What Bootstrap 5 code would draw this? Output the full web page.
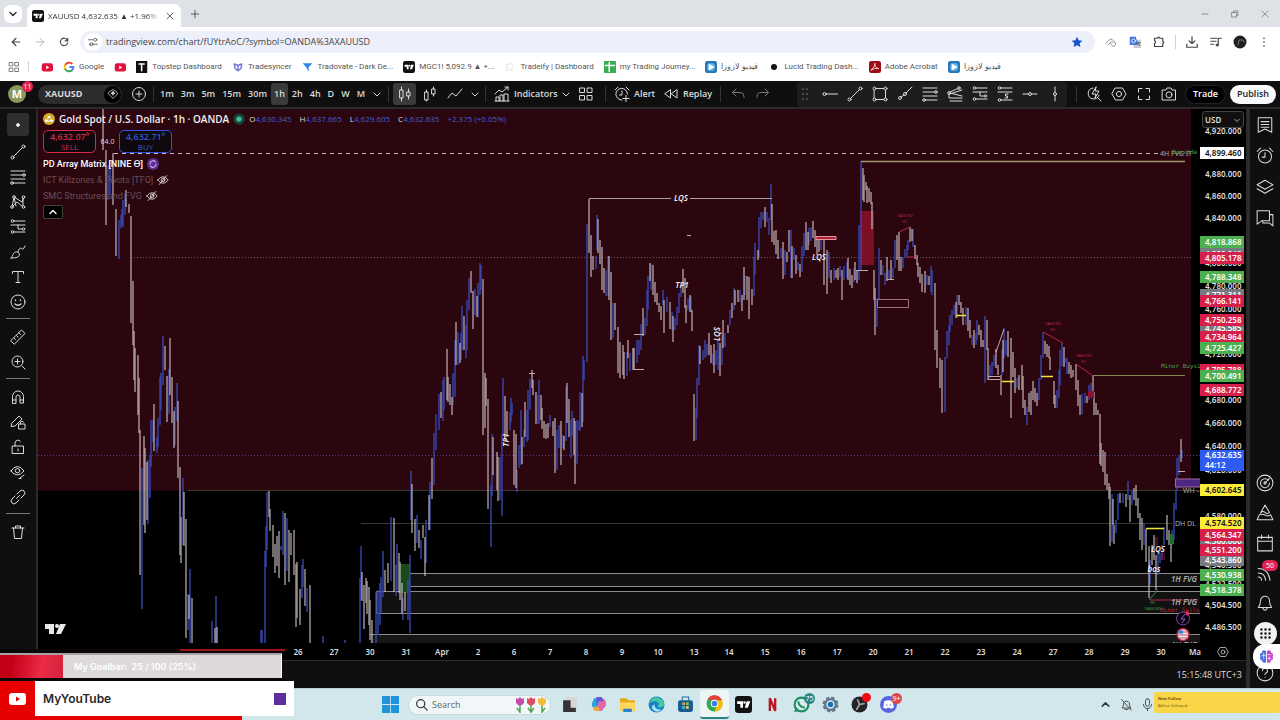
<!DOCTYPE html>
<html lang="en">
<head>
<meta charset="utf-8">
<meta name="viewport" content="width=device-width, initial-scale=1">
<title>XAUUSD 4,632.635</title>
<link href="https://cdn.jsdelivr.net/npm/bootstrap@5.3.0/dist/css/bootstrap.min.css" rel="stylesheet">
<style>
body{font-family:"Open Sans","Noto Sans",sans-serif;font-size:9px;line-height:12px;background:#0f0f0f;color:#dbdbdb}
button,input,select{font:inherit;color:inherit;line-height:inherit}
button{background:none;border:0;padding:0}
a{color:inherit;text-decoration:none}
.ico{width:16px;height:16px;fill:none;stroke:currentColor;stroke-width:1;stroke-linecap:round;stroke-linejoin:round;flex:none;display:block}
.ico-sm{width:12px;height:12px}
.ico-btn{display:flex;align-items:center;justify-content:center;flex:none}
.shell{height:100vh;min-height:600px}
.tabstrip{height:27px;background:#dee1e6;color:#333}
.tabfind{width:18px;height:18px;border-radius:6px;background:#fff;margin:0 5px 0 4px}
.tab-on{height:23px;width:154px;background:#fff;border-radius:7px 7px 0 0;margin-top:4px;padding:0 5px}
.tab-text{width:112px;overflow:hidden;white-space:nowrap;font-size:8px;-webkit-mask-image:linear-gradient(90deg,#000 88%,transparent)}
.winbtn{width:30px;height:27px;color:#777}
.omni{height:30px;background:#fff;color:#444}
.omni .ico-btn{width:24px}
.urlbox{height:22px;border-radius:11px;background:#edf0fa}
.urlbox .site{width:18px;height:18px;border-radius:50%;background:#fff}
.urlbox input{border:0;background:none;outline:0;font-size:9px;color:#444;padding:0}
.marks{height:24px;background:#fff;color:#555;font-family:Roboto,"Noto Sans",sans-serif;font-size:8px;white-space:nowrap;padding-bottom:5px}
.marks a{display:flex;align-items:center;gap:4px;margin-right:10px}
.bar1{height:26px;background:#0f0f0f;white-space:nowrap}
.bar1 .grp{height:16px;border-right:1px solid #333}
.bar1 .ico-btn{width:25px;height:22px}
.bar1 .sel.ico-btn{width:23px;margin-right:1px}
.ivl{gap:1px;padding-left:3px}
.ivl button{padding:0 3px;height:22px;border-radius:3px;font-weight:600}
.ivl button.sel,.bar1 .sel{background:#3a3a3a;border-radius:3px}
.pill{width:84px;height:19px;border-radius:10px;background:#2c2c2c;font-weight:700;padding:0 1px 0 7px}
.bar1 .gem{width:17px;height:17px}
.bar1 .avatar{width:18px;height:18px;border-radius:50%;background:#8b9a58;color:#fff;font-size:11px;font-weight:700;margin:0 12px 0 8px}
.count{font-size:7px;line-height:11px;min-width:11px;border-radius:6px;background:#e0234e;color:#fff;text-align:center;position:absolute}
.drawbar{width:270px;background:#1d1d1d;height:25px;border-radius:4px}
.cta{height:19px;border-radius:10px;padding:0 7px;font-weight:600;font-size:9px}
.work{border-top:2px solid #2b2b2b}
.rail{width:36px;padding-top:4px}
.rail .ico-btn{width:22px;height:25px}
.rail hr{width:24px;margin:4px 0 5px;border-color:#777;opacity:1}
.rail .sel{background:#2e2e2e;border-radius:3px;height:23px;margin-bottom:3px}
.rightrail{width:34px;border-left:4px solid #2b2b2b}
.rightrail .ico-btn{width:30px;height:30px}
.rightrail .top .ico-btn{height:31px}
.rightrail .ico{width:18px;height:18px;stroke-width:.9}
.rightrail .last{padding-top:10px}
.rightrail .apps-ring{width:23px;height:23px;border-radius:50%;background:#f1f1f1;color:#111}
.rightrail .apps-ring .ico{width:13px;height:13px}
.brain{right:0;bottom:51px;width:27px;height:25px;border-radius:12px 0 0 12px;background:#fff;z-index:3}
.chartbox{border-left:2px solid #2b2b2b;background:#000}
.plot text{font-family:"Noto Sans",sans-serif}
.plot .mono text{font-family:"DejaVu Sans Mono",monospace}
.legend{left:5px;top:3px;font-size:9px}
.legend h1{font-size:10px;line-height:14px;font-weight:600;color:#f1eef0}
.ohlc{color:#3f5fd8;font-size:8px}
.ohlc b{color:#ddd;font-weight:400}
.tkt{width:53px;height:23px;border:1px solid;border-radius:5px;background:#0d090c;font-size:8px;line-height:10px;text-align:center}
.tkt strong{font-size:9px;font-weight:600}
.spread{width:23px;font-size:7px}
.sell{color:#d8294b}.buy{color:#2f57df}
.studies{padding-top:3px}
.study{font-family:Roboto,"Noto Sans",sans-serif;font-weight:500;height:16px}
.dim{color:#685058;font-weight:400}
.fold{width:20px;height:14px;border:1px solid #443;background:#000;border-radius:2px;margin-top:1px}
.paxis{width:46px;background:#000;overflow:hidden;font-family:"Noto Sans",sans-serif;font-size:8px;font-weight:600}
.plabel{position:absolute;left:0;width:44px;height:12px;line-height:12px;padding-left:5px;color:#ddd}
.k-g{background:#4caf50;color:#fff}.k-r{background:#d81e4a;color:#fff}.k-x{background:#777a80;color:#fff}
.k-w{background:#fff;color:#111}.k-y{background:#fbec3a;color:#111}.k-b{background:#2f5cf0;color:#fff;height:21px;line-height:10px}
.unit{left:2px;top:2px;width:42px;height:17px;background:#101010;border:1px solid #444;border-radius:3px;color:#ddd;font-size:8px;padding:0 2px;appearance:none}
.unitmark{right:3px;top:5px;position:absolute;pointer-events:none}
.taxis{height:18px;background:#000;font-family:"Noto Sans",sans-serif;font-size:8px;font-weight:600;border-bottom:1px solid #2b2b2b}
.tick{position:absolute;top:3px;transform:translateX(-50%)}
.status{height:27px;font-size:9px;background:#0f0f0f}
.dock{height:32px;background:#d1e7eb;color:#333;padding-left:376px;border-top:1px solid #bccdd2}
.dock .ico-btn{width:29px;height:29px}
.dock .ico,.dockico{width:17px;height:17px;flex:none}
.dock .tray{padding-right:126px}
.dock .tray .ico,.searchbox .ico{width:13px;height:13px}
.dock .active-app{background:#edf5f5;border-radius:3px;border-bottom:2px solid #2b8584}
.searchbox{width:143px;height:20px;border-radius:10px;background:#f1f7f8;margin-left:3px;border:1px solid #c7dade;padding:0 2px 0 6px}
.searchbox input{flex:1 1 0;min-width:0;height:16px;padding:0;border:0;background:none;outline:0;font-size:9px}
.searchbox input::placeholder{color:#666;opacity:1}
.toast-y{right:0;bottom:7px;width:126px;height:21px;background:#f8d648;border-radius:2px;color:#6b5212;font-size:4px;line-height:7px;padding:3px 4px;z-index:4}
.goal{left:0;bottom:0;width:294px;z-index:4}
.goaltop{height:4px;width:285px;background:#0b0607}
.goaltop span{display:block;width:105px;height:2px;margin-left:auto;background:#a31212}
.goalbar{width:282px;height:25px;background:#ddd8da;color:#fff;font-family:Inter,sans-serif;font-size:9px;font-weight:600;border-right:1px solid #fff;border-top:2px solid #a9a3a5}
.goalfill{width:63px;background:linear-gradient(100deg,#c40018 20%,#e92b45 65%,#d5223c);margin-right:11px}
.goalgap{height:3px;width:285px;background:#0e0707}
.channel{height:35px;background:#fff;font-family:Inter,sans-serif;font-size:12px;font-weight:600;color:#29292b}
.yt{width:35px;background:#e60000}
.sq{width:12px;height:12px;background:#5c2f9d}
.redline{height:4px;width:242px;background:#e60000}
</style>
</head>
<body class="overflow-hidden">
<svg width="0" height="0" class="position-absolute" aria-hidden="true"><defs>
<symbol id="chev" viewBox="0 0 16 16"><path d="M5 7l3 3 3-3"/></symbol>
<symbol id="up" viewBox="0 0 16 16"><path d="M4 10l4-4 4 4" stroke-width="1.8"/></symbol>
<symbol id="x" viewBox="0 0 16 16"><path d="M4 4l8 8M12 4l-8 8"/></symbol>
<symbol id="plus" viewBox="0 0 16 16"><path d="M8 3v10M3 8h10"/></symbol>
<symbol id="tv" viewBox="0 0 16 16"><rect width="16" height="16" rx="3" fill="#111" stroke="none"/><path d="M2 5h5.500v6H5V7.500H2zM11 5h3.500l-2.500 6H9.200z" fill="#fff" stroke="none"/><circle cx="9" cy="6.200" r="1.200" fill="#fff" stroke="none"/></symbol>
<symbol id="back" viewBox="0 0 16 16"><path d="M13 8H3m5-5L3 8l5 5" stroke-width="1.500"/></symbol>
<symbol id="reload" viewBox="0 0 16 16"><path d="M12.500 5.500A5 5 0 1 0 13 9M13 3v3.500H9.500" stroke-width="1.500"/></symbol>
<symbol id="tune" viewBox="0 0 16 16"><path d="M2 5h6M9 11h5M3 11h2"/><circle cx="11" cy="5" r="2"/><circle cx="6" cy="11" r="2"/></symbol>
<symbol id="apps" viewBox="0 0 16 16"><path d="M2 2h4.500v4.500H2zM9.500 2H14v4.500H9.500zM2 9.500h4.500V14H2zM9.500 9.500H14V14H9.500z"/></symbol>
<symbol id="ytb" viewBox="0 0 16 16"><rect x="1" y="3" width="15" height="11" rx="3" fill="#e2103b" stroke="none"/><path d="M7 6l4 2.500L7 11z" fill="#fff" stroke="none"/></symbol>
<symbol id="goog" viewBox="0 0 16 16"><g stroke-width="2.600" fill="none" stroke-linecap="butt"><path d="M12.500 4A6 6 0 0 0 3 5.200" stroke="#e94235"/><path d="M3 5a6 6 0 0 0 0 6" stroke="#fbbc04"/><path d="M2.800 10.500a6 6 0 0 0 9 2" stroke="#34a853"/><path d="M11.500 12.700A6 6 0 0 0 14 8H8.500" stroke="#4285f4"/></g></symbol>
<symbol id="play" viewBox="0 0 16 16"><rect width="16" height="16" rx="3" fill="#2878b8" stroke="none"/><rect x="3" y="3" width="10" height="10" rx="3" fill="#5fb5ec" stroke="none"/><path d="M5 3.500L13 8l-8 4.500z" fill="#fff" stroke="none"/></symbol>
<symbol id="cndl" viewBox="0 0 16 16"><path d="M3 4h3v8H3zM4.500 1v3M4.500 12v3M10 6h3v4h-3zM11.500 3v3M11.500 10v3"/></symbol>
<symbol id="cndl2" viewBox="0 0 16 16"><path d="M3 6h3v8H3zM4.500 4v2M10 3h3v5h-3zM11.500 1v2M11.500 8v2M4.500 14v1"/></symbol>
<symbol id="zig" viewBox="0 0 16 16"><path d="M1 12l4-5 4 3 6-7"/></symbol>
<symbol id="ind" viewBox="0 0 16 16"><path d="M1 8l4-4 3 2 6-5M11 1h3v3M2 15v-4h3v4M6 15V9h3v6M10 15v-7h4v7M1 15h14"/></symbol>
<symbol id="alarm" viewBox="0 0 16 16"><circle cx="8" cy="8.500" r="5.800"/><path d="M8 5v4H5.500M1 4l3-3M12 1l3 3"/></symbol>
<symbol id="alarmp" viewBox="0 0 16 16"><path d="M8 14A5.800 5.800 0 1 1 13.500 8M8 5v4H5.500M1 4l3-3M12 1l3 3M12 9.500v6M9 12.500h6"/></symbol>
<symbol id="rew" viewBox="0 0 16 16"><path d="M7.500 4v8L2 8zM14 4v8L8.500 8z"/></symbol>
<symbol id="undo" viewBox="0 0 16 16"><path d="M6 3L2.500 6.500 6 10M2.500 6.500H10a4 4 0 0 1 4 4v1"/></symbol>
<symbol id="drag" viewBox="0 0 16 16"><path d="M6 3v.1M10 3v.1M6 8v.1M10 8v.1M6 13v.1M10 13v.1" stroke-width="1.600"/></symbol>
<symbol id="ray" viewBox="0 0 16 16"><circle cx="2.500" cy="8" r="1.500"/><path d="M4 8h12"/></symbol>
<symbol id="trend" viewBox="0 0 16 16"><circle cx="2.500" cy="13.500" r="1.500"/><circle cx="13.500" cy="2.500" r="1.500"/><path d="M3.500 12.500l9-9"/></symbol>
<symbol id="rect" viewBox="0 0 16 16"><path d="M2.500 2.500h11v11h-11z"/><g fill="#1d1d1d"><circle cx="2.500" cy="2.500" r="1.500"/><circle cx="13.500" cy="2.500" r="1.500"/><circle cx="2.500" cy="13.500" r="1.500"/><circle cx="13.500" cy="13.500" r="1.500"/></g></symbol>
<symbol id="ray2" viewBox="0 0 16 16"><circle cx="3" cy="12" r="1.500"/><circle cx="8" cy="8" r="1.500"/><path d="M4 11l3-2M9 7l6-6"/></symbol>
<symbol id="fib" viewBox="0 0 16 16"><path d="M1 2h14M1 6h12M1 10h14M3 14h12"/><circle cx="14" cy="6" r="1.300"/><circle cx="2" cy="14" r="1.300"/></symbol>
<symbol id="fan" viewBox="0 0 16 16"><path d="M3 6l8-3.500M3 7l12 3M2 8v4h13M3 15h12M3 8l12-4"/><circle cx="12" cy="2" r="1.300"/><circle cx="2" cy="7" r="1.300"/></symbol>
<symbol id="pos" viewBox="0 0 16 16"><path d="M4 2h11M1 6h14M4 13h11M8 6v4h4"/><circle cx="2.500" cy="2" r="1.300"/><circle cx="2.500" cy="13" r="1.300"/><circle cx="13.500" cy="10" r="1.200"/></symbol>
<symbol id="posb" viewBox="0 0 16 16"><path d="M4 2h11M1 6h14M4 14h11M11 8H8.500v2h2v2H8"/><circle cx="2.500" cy="2" r="1.300"/><circle cx="2.500" cy="14" r="1.300"/></symbol>
<symbol id="hline" viewBox="0 0 16 16"><path d="M1 8h5.500M9.500 8H15"/><circle cx="8" cy="8" r="1.500"/></symbol>
<symbol id="vline" viewBox="0 0 16 16"><path d="M8 1v5.500M8 9.500V15"/><circle cx="8" cy="8" r="1.500"/></symbol>
<symbol id="quick" viewBox="0 0 16 16"><path d="M7 2a5.500 5.500 0 1 0 6 7M12 12l3 3M10 1L6 8h4l-1 4 4-7H9.500z"/></symbol>
<symbol id="hex" viewBox="0 0 16 16"><path d="M4.500 2h7L15 8l-3.500 6h-7L1 8z"/><circle cx="8" cy="8" r="2.600"/></symbol>
<symbol id="full" viewBox="0 0 16 16"><path d="M2.500 6V2.500H6M10 2.500h3.500V6M13.500 10v3.500H10M6 13.500H2.500V10"/></symbol>
<symbol id="cam" viewBox="0 0 16 16"><path d="M1.500 4H5l1-2h4l1 2h3.500v10h-13z"/><circle cx="8" cy="8.800" r="3"/></symbol>
<symbol id="patt" viewBox="0 0 16 16"><path d="M2 13L4 3l8 5 2-5M2 13l5-5 6 5L13 3M4 3l2 9"/><g fill="#0f0f0f"><circle cx="2" cy="13" r="1.300"/><circle cx="4" cy="3" r="1.300"/><circle cx="13.500" cy="3" r="1.300"/><circle cx="13.500" cy="13" r="1.300"/></g></symbol>
<symbol id="brush" viewBox="0 0 16 16"><path d="M1 14c2 0 1-5 4.500-6s5 3 3 4.500S4 14 1 14zM8 8c1-4 3-5 4-3 1 1 2-1 3-3"/></symbol>
<symbol id="txt" viewBox="0 0 16 16"><path d="M2.500 4.500V2.500h11v2M8 2.500v11M6 13.500h4"/></symbol>
<symbol id="smile" viewBox="0 0 16 16"><circle cx="8" cy="8" r="7"/><path d="M5.500 6v.5M10.500 6v.5M5 10q3 2.500 6 0" stroke-width="1.300"/></symbol>
<symbol id="ruler" viewBox="0 0 16 16"><path d="M1 11.500L11.500 1 15 4.500 4.500 15zM4 9l1.500 1.500M6.500 6.500L8 8M9 4l1.500 1.500"/></symbol>
<symbol id="zoomi" viewBox="0 0 16 16"><circle cx="7.500" cy="7.500" r="5.500"/><path d="M12 12l3 3M5 7.500h5M7.500 5v5"/></symbol>
<symbol id="magn" viewBox="0 0 16 16"><path d="M2.500 14V7.500a5.500 5.500 0 0 1 11 0V14H10V8a2 2 0 0 0-4 0v6zM2.500 11H6M10 11h3.500"/></symbol>
<symbol id="penl" viewBox="0 0 16 16"><path d="M2 9L9 2l3 3-7 7-3.500.5zM9 10h6v5H9zM10.500 10V8q1.500-2 3 0"/></symbol>
<symbol id="lock" viewBox="0 0 16 16"><path d="M2.500 7h11v7.500h-11zM5 7V4a3 3 0 0 1 5.500-1.500M8 10v2"/></symbol>
<symbol id="eye" viewBox="0 0 16 16"><path d="M1 7q6-9 13 0-7 8-13 0zM10 14l4-3M9 14.500h2"/><circle cx="7.500" cy="6.700" r="2.200"/></symbol>
<symbol id="noeye" viewBox="0 0 16 16"><path d="M1 8q7-9 14 0-7 9-14 0zM13 2L3 14"/><circle cx="8" cy="8" r="2.500"/></symbol>
<symbol id="link" viewBox="0 0 16 16"><path d="M6.500 9.500l3-3M7 5l3-3a2.800 2.800 0 0 1 4 4l-3 3M9 11l-3 3a2.800 2.800 0 0 1-4-4l3-3"/></symbol>
<symbol id="bin" viewBox="0 0 16 16"><path d="M2 4h12M5.500 4V2h5v2M3.500 4l1 10.500h7l1-10.500"/></symbol>
<symbol id="list" viewBox="0 0 16 16"><path d="M2 1.500h12v13l-6-3-6 3zM4.500 5h7M4.500 7.500h7M4.500 10h7"/></symbol>
<symbol id="layers" viewBox="0 0 16 16"><path d="M8 2l7 4-7 4-7-4zM1 9.500l7 4 7-4"/></symbol>
<symbol id="chat" viewBox="0 0 16 16"><path d="M1 1.500h11v9H5L1 13.500zM12 5h3v10l-3-2.500H6v-2"/></symbol>
<symbol id="radar" viewBox="0 0 16 16"><circle cx="8" cy="8" r="7"/><path d="M11 5.500A4 4 0 1 0 12 8M8 8l4.500-4.500"/><circle cx="8" cy="8" r="1"/></symbol>
<symbol id="pyr" viewBox="0 0 16 16"><path d="M8 1l4 6.500q-2 2-4 0t-4 .5zM3 9.500L1 14h14l-2-4.500q-2 2-4.500.5T3 9.500"/></symbol>
<symbol id="cal" viewBox="0 0 16 16"><path d="M1.500 3h13v12h-13zM1.500 6.500h13M5 1v3M11 1v3"/></symbol>
<symbol id="feed" viewBox="0 0 16 16"><path d="M2 4q9 0 10.500 10.500M2 8q6 0 6.500 6.500M2 11.500q3 0 3 3"/></symbol>
<symbol id="bell" viewBox="0 0 16 16"><path d="M2 12q2-2 2-6a4 4 0 0 1 8 0q0 4 2 6zM6 12.500q2 4 4 0"/></symbol>
<symbol id="dots9" viewBox="0 0 16 16"><g stroke-width="3"><path d="M3 3h.01M8 3h.01M13 3h.01M3 8h.01M8 8h.01M13 8h.01M3 13h.01M8 13h.01M13 13h.01"/></g></symbol>
<symbol id="help" viewBox="0 0 16 16"><circle cx="8" cy="8" r="7"/><path d="M5.800 6a2.200 2.200 0 1 1 3 2q-.8.500-.8 1.500M8 12v.1"/></symbol>
<symbol id="mag" viewBox="0 0 16 16"><circle cx="7" cy="7" r="5" stroke-width="1.500"/><path d="M11 11l4 4" stroke-width="1.500"/></symbol>
</defs></svg>

<div class="shell d-flex flex-column position-relative">
<header class="flex-shrink-0">
 <div class="tabstrip d-flex align-items-center">
  <button class="tabfind ico-btn" aria-label="Search tabs"><svg class="ico ico-sm" viewBox="0 0 16 16"><path d="M4 6l4 4 4-4" stroke-width="2"/></svg></button>
  <div class="tab-on d-flex align-items-center gap-1"><svg class="ico ico-sm"><use href="#tv"/></svg><span class="tab-text">XAUUSD 4,632.635 ▲ +1.96% Un</span><button class="ico-btn ms-auto" aria-label="Close tab"><svg class="ico ico-sm"><use href="#x"/></svg></button></div>
  <button class="ico-btn ms-2" aria-label="New tab"><svg class="ico ico-sm"><use href="#plus"/></svg></button>
  <div class="d-flex ms-auto">
   <button class="winbtn ico-btn" aria-label="Minimize"><svg class="ico ico-sm" viewBox="0 0 16 16"><path d="M4 8h8"/></svg></button>
   <button class="winbtn ico-btn" aria-label="Restore"><svg class="ico ico-sm" viewBox="0 0 16 16"><path d="M4 6h6v6H4zM6 6V4h6v6h-2"/></svg></button>
   <button class="winbtn ico-btn" aria-label="Close"><svg class="ico ico-sm"><use href="#x"/></svg></button>
  </div>
 </div>
 <div class="omni d-flex align-items-center px-1">
  <button class="ico-btn" aria-label="Back"><svg class="ico ico-sm"><use href="#back"/></svg></button>
  <button class="ico-btn opacity-50" aria-label="Forward"><svg class="ico ico-sm" viewBox="0 0 16 16"><path d="M3 8h10M8 3l5 5-5 5"/></svg></button>
  <button class="ico-btn" aria-label="Reload"><svg class="ico ico-sm"><use href="#reload"/></svg></button>
  <div class="urlbox d-flex align-items-center flex-grow-1 mx-1 pe-1"><span class="site ico-btn mx-1"><svg class="ico ico-sm"><use href="#tune"/></svg></span><input class="flex-grow-1" aria-label="Address" value="tradingview.com/chart/fUYtrAoC/?symbol=OANDA%3AXAUUSD"><svg class="ico ico-sm me-2" viewBox="0 0 16 16"><path d="M8 1l2.200 4.700 5 .6-3.700 3.500 1 5L8 12.300l-4.500 2.500 1-5L.8 6.300l5-.6z" fill="#1a55cf" stroke="none"/></svg></div>
  <span class="ico-btn"><svg class="ico ico-sm opacity-75" viewBox="0 0 16 16"><path d="M1 10l5-5q2-2 4 0l3 3q3 3 0 5t-4-1l-2-2M4 12l4-4q2-1 3 1"/></svg></span>
  <span class="ico-btn"><svg class="ico ico-sm" viewBox="0 0 16 16"><rect x="6" y="5" width="10" height="11" rx="1" fill="#c5cad2" stroke="none"/><path d="M1 1h8l3 11H1z" fill="#4479dd" stroke="none"/><circle cx="6" cy="6.500" r="2.500" stroke="#fff"/><path d="M10 9h5M12 8l2 5"/></svg></span>
  <span class="ico-btn"><svg class="ico ico-sm" viewBox="0 0 16 16"><path d="M2 3h4q1-3 3 0h4v4q3 1 0 3v4H2v-4q3-2 0-4z" stroke-width="1.600"/></svg></span>
  <span class="vr mx-1 my-2"></span>
  <span class="ico-btn"><svg class="ico ico-sm" viewBox="0 0 16 16"><path d="M8 1v9M4 6.500L8 10l4-3.500M1 11v4h14v-4" stroke-width="1.600"/></svg></span>
  <span class="ico-btn"><svg class="ico ico-sm" viewBox="0 0 16 16"><path d="M1 3h8M1 7h7M1 11h4M11 12V3h4" stroke-width="1.600"/><circle cx="9.500" cy="12" r="1.500" fill="currentColor"/></svg></span>
  <span class="ico-btn"><svg class="ico" viewBox="0 0 16 16"><circle cx="8" cy="8" r="6.500" fill="#202020" stroke="none"/><path d="M6 11l1-5h4l1 2" stroke="#777"/></svg></span>
  <span class="ico-btn"><svg class="ico ico-sm" viewBox="0 0 16 16"><path d="M8 3v.1M8 8v.1M8 13v.1" stroke-width="2.200"/></svg></span>
 </div>
 <nav class="marks d-flex align-items-center ps-2" aria-label="Bookmarks">
  <svg class="ico ico-sm"><use href="#apps"/></svg><span class="vr mx-2 my-1"></span>
  <a class="ms-1" href="#" aria-label="YouTube"><svg class="ico ico-sm"><use href="#ytb"/></svg></a>
  <a href="#"><svg class="ico ico-sm"><use href="#goog"/></svg>Google</a>
  <a href="#" aria-label="YouTube"><svg class="ico ico-sm"><use href="#ytb"/></svg></a>
  <a href="#"><svg class="ico ico-sm" viewBox="0 0 16 16"><rect width="15" height="16" fill="#111" stroke="none"/><path d="M4 4h7M7.500 4v9" stroke="#fff" stroke-width="2"/></svg>Topstep Dashboard</a>
  <a href="#"><svg class="ico ico-sm" viewBox="0 0 16 16"><path d="M3 4l5 2 5-2-1 6-4 3-4-3zM8 6v6" stroke="#7a74d8" stroke-width="2"/></svg>Tradesyncer</a>
  <a href="#"><svg class="ico ico-sm" viewBox="0 0 16 16"><path d="M1 3h13L9 8v6L6 9z" fill="#3286e8" stroke="none"/></svg>Tradovate - Dark De...</a>
  <a href="#"><svg class="ico ico-sm"><use href="#tv"/></svg>MGC1! 5,092.9 ▲ +...</a>
  <a href="#"><svg class="ico ico-sm" viewBox="0 0 16 16"><path d="M3 4l4 1 2-3 2 3 2 2-3 2 1 4-4-2-4 2 1-4z" stroke="#ddd"/></svg>Tradeify | Dashboard</a>
  <a href="#"><svg class="ico ico-sm" viewBox="0 0 16 16"><rect width="16" height="16" rx="1" fill="#38ad50" stroke="none"/><path d="M2 6h12M7 2v12" stroke="#fff" stroke-width="2"/></svg>my Trading Journey...</a>
  <a href="#"><svg class="ico ico-sm"><use href="#play"/></svg><span dir="rtl">فيديو لازوزا</span></a>
  <a href="#"><svg class="ico ico-sm" viewBox="0 0 16 16"><circle cx="8" cy="8" r="4" fill="#111" stroke="none"/></svg>Lucid Trading Dash...</a>
  <a href="#"><svg class="ico ico-sm" viewBox="0 0 16 16"><rect width="16" height="16" rx="3" fill="#a00a12" stroke="none"/><path d="M3 12q5-4 5-9-1 6 5 7-6-1-10 2" stroke="#fff"/></svg>Adobe Acrobat</a>
  <a href="#"><svg class="ico ico-sm"><use href="#play"/></svg><span dir="rtl">فيديو لازوزا</span></a>
 </nav>
</header>

<div class="bar1 d-flex align-items-center flex-shrink-0">
 <div class="grp d-flex align-items-center position-relative" style="width:154px"><span class="avatar ico-btn">M</span><span class="count" style="left:22px;top:-5px">11</span>
  <button class="pill d-flex align-items-center justify-content-between"><span>XAUUSD</span><span class="gem ico-btn bg-black rounded-circle"><svg class="ico ico-sm" viewBox="0 0 16 16"><path d="M3 5l5-3 5 3 1 3-6 6-6-6z"/><path d="M8 5v4M6 7h4" stroke-width="2"/></svg></span></button>
  <button class="ico-btn ms-1" aria-label="Add symbol"><svg class="ico" viewBox="0 0 16 16"><circle cx="8" cy="8" r="6.500"/><path d="M8 5v6M5 8h6"/></svg></button></div>
 <div class="grp ivl d-flex align-items-center" style="width:235px"><button>1m</button><button>3m</button><button>5m</button><button>15m</button><button>30m</button><button class="sel">1h</button><button>2h</button><button>4h</button><button>D</button><button>W</button><button>M</button><button class="px-0" aria-label="More intervals"><svg class="ico"><use href="#chev"/></svg></button></div>
 <div class="grp d-flex align-items-center" style="width:97px"><button class="ico-btn sel ms-1" aria-label="Candles"><svg class="ico"><use href="#cndl"/></svg></button><button class="ico-btn" aria-label="Hollow candles"><svg class="ico"><use href="#cndl2"/></svg></button><button class="ico-btn" aria-label="Line"><svg class="ico"><use href="#zig"/></svg></button><button aria-label="Chart types"><svg class="ico"><use href="#chev"/></svg></button></div>
 <div class="grp d-flex align-items-center ps-2" style="width:120px"><button class="d-flex align-items-center gap-1 fw-semibold"><svg class="ico"><use href="#ind"/></svg>Indicators</button><button aria-label="Favorite indicators"><svg class="ico"><use href="#chev"/></svg></button><button class="ico-btn" aria-label="Templates"><svg class="ico"><use href="#apps"/></svg></button></div>
 <div class="grp d-flex align-items-center justify-content-between px-2" style="width:115px"><button class="d-flex align-items-center gap-1 fw-semibold"><svg class="ico"><use href="#alarmp"/></svg>Alert</button><button class="d-flex align-items-center gap-1 fw-semibold"><svg class="ico"><use href="#rew"/></svg>Replay</button></div>
 <div class="d-flex align-items-center ps-1 opacity-50"><button class="ico-btn" aria-label="Undo"><svg class="ico"><use href="#undo"/></svg></button><button class="ico-btn" aria-label="Redo"><svg class="ico" viewBox="0 0 16 16"><path d="M10 3l3.500 3.500L10 10M13.500 6.500H6a4 4 0 0 0-4 4v1"/></svg></button></div>
 <div class="drawbar d-flex align-items-center justify-content-between ms-auto pe-1"><span><svg class="ico opacity-50"><use href="#drag"/></svg></span>
  <button aria-label="Ray"><svg class="ico"><use href="#ray"/></svg></button><button aria-label="Trend line"><svg class="ico"><use href="#trend"/></svg></button><button aria-label="Rectangle"><svg class="ico"><use href="#rect"/></svg></button><button aria-label="Info line"><svg class="ico"><use href="#ray2"/></svg></button><button aria-label="Fib retracement"><svg class="ico"><use href="#fib"/></svg></button><button aria-label="Fib fan"><svg class="ico"><use href="#fan"/></svg></button><button aria-label="Long position"><svg class="ico"><use href="#pos"/></svg></button><button aria-label="Short position"><svg class="ico"><use href="#posb"/></svg></button><button aria-label="Horizontal line"><svg class="ico"><use href="#hline"/></svg></button><button aria-label="Vertical line"><svg class="ico"><use href="#vline"/></svg></button></div>
 <div class="grp me-1" style="width:10px"></div>
 <button class="ico-btn" aria-label="Quick search"><svg class="ico"><use href="#quick"/></svg></button><button class="ico-btn" aria-label="Settings"><svg class="ico"><use href="#hex"/></svg></button><button class="ico-btn" aria-label="Fullscreen"><svg class="ico"><use href="#full"/></svg></button><button class="ico-btn" aria-label="Snapshot"><svg class="ico"><use href="#cam"/></svg></button>
 <button class="cta bg-black text-white border border-dark ms-1">Trade</button><button class="cta bg-light text-dark mx-1">Publish</button>
</div>

<main class="work d-flex flex-grow-1 overflow-hidden">
 <aside class="rail d-flex flex-column align-items-center flex-shrink-0">
  <button class="ico-btn sel" aria-label="Cursor"><svg class="ico" viewBox="0 0 16 16"><circle cx="8" cy="8" r="1.500" fill="#fff"/></svg></button><button class="ico-btn" aria-label="Lines"><svg class="ico"><use href="#trend"/></svg></button><button class="ico-btn" aria-label="Fib"><svg class="ico"><use href="#fib"/></svg></button><button class="ico-btn" aria-label="Patterns"><svg class="ico"><use href="#patt"/></svg></button><button class="ico-btn" aria-label="Positions"><svg class="ico"><use href="#pos"/></svg></button><button class="ico-btn" aria-label="Brush"><svg class="ico"><use href="#brush"/></svg></button><button class="ico-btn" aria-label="Text"><svg class="ico"><use href="#txt"/></svg></button><button class="ico-btn" aria-label="Icons"><svg class="ico"><use href="#smile"/></svg></button>
  <hr><button class="ico-btn" aria-label="Measure"><svg class="ico"><use href="#ruler"/></svg></button><button class="ico-btn" aria-label="Zoom in"><svg class="ico"><use href="#zoomi"/></svg></button>
  <hr><button class="ico-btn" aria-label="Magnet"><svg class="ico"><use href="#magn"/></svg></button><button class="ico-btn" aria-label="Keep drawing"><svg class="ico"><use href="#penl"/></svg></button><button class="ico-btn" aria-label="Lock"><svg class="ico"><use href="#lock"/></svg></button><button class="ico-btn" aria-label="Hide"><svg class="ico"><use href="#eye"/></svg></button><button class="ico-btn" aria-label="Link"><svg class="ico"><use href="#link"/></svg></button>
  <hr><button class="ico-btn" aria-label="Remove"><svg class="ico"><use href="#bin"/></svg></button>
 </aside>
 <div class="d-flex flex-column flex-grow-1 overflow-hidden">
  <div class="chartbox d-flex flex-grow-1 overflow-hidden">
   <div class="position-relative flex-grow-1 overflow-hidden">
    <svg class="plot d-block w-100 h-100" viewBox="38 109 1162 534" preserveAspectRatio="xMinYMin slice" role="img" aria-label="XAUUSD 1 hour chart">
     <rect x="38" y="109" width="1153" height="381.500" fill="#2b060f"/>
     <path d="M114 153.500H1160" stroke="#c9b5bb" stroke-dasharray="4 4"/>
     <path d="M134 257.500H1191" stroke="#70515a" stroke-dasharray="1 2"/>
     <path d="M38 455.500H1200" stroke="#4a3d82" stroke-dasharray="1 2"/>
     <path d="M188 490.500H1200M361 523.500H1172" stroke="#3b392c"/>
     <rect x="408" y="573.500" width="792" height="13" fill="#111"/><rect x="376" y="591.500" width="824" height="22" fill="#111"/><rect x="370" y="634" width="830" height="9" fill="#161616"/>
     <path d="M1200 573.500H408.500V586.500H1200M1200 591.500H376.500V613.500H1200M370 634.500H1200" fill="none" stroke="#8c8c8c"/>
     <rect x="400" y="564" width="10" height="29" fill="#174b1c"/><rect x="860" y="211" width="14" height="54" fill="#7b1025"/>
     <g id="bars" stroke-width="1.500" fill="none"></g>
     <path d="M589 198.500H671M690 198.500H772" stroke="#b29da3"/><path d="M861 161.500H1185" stroke="#a5976a" stroke-width="1.500"/><path d="M1093 375.500H1185" stroke="#7d8a4c"/>
     <path d="M816 236.500h20v3h-20z" fill="#a23" stroke="#e694a4"/><path d="M877.500 299.500h31v8h-31z" fill="none" stroke="#a8707d"/>
     <path d="M856 270.500h12M634 334.500h10M633 369.500h11M687 235.500h4M529 373.500h6M887 279.500h7M988 376.500h12M988 379.500h12M1178 471.500h7M996 352l8-23" stroke="#c0aab0" fill="none"/>
     <path d="M956 315.500h10M1002 381.500h12M1041 376.500h12M1146 528.500h18" stroke="#f4e33c" stroke-width="1.500"/>
     <path d="M899 232l11-5M1043 332l20 11M1076 364l17 12M1150 600h48M907 257h8" stroke="#b92749" fill="none"/><path d="M1149 600l9-10" stroke="#3b8f45"/>
     <rect x="1175.500" y="479" width="25" height="8" fill="#4d2782" stroke="#a46a9b"/><rect x="1088" y="391" width="6" height="7" fill="#8a1233"/>
     <rect x="1155" y="537" width="3" height="10" fill="#7a1230" opacity=".6"/><rect x="1161" y="553" width="4" height="7" fill="#7a1230" opacity=".6"/><rect x="1170" y="534" width="4" height="10" fill="#1d6e2e"/>
     <g font-size="8" font-weight="600" font-style="italic" fill="#efe6e8" text-anchor="middle"><text x="681" y="201">LQS</text><text x="682" y="288">TP1</text><text x="819" y="260">LQS</text><text transform="translate(720 334) rotate(-90)">LQS</text><text transform="translate(509 440) rotate(-90)">TP1</text><text x="1158" y="552">LQS</text><text x="1154" y="572">bos</text><text x="1184" y="582" fill="#aaa">1H FVG</text><text x="1184" y="605" fill="#aaa">1H FVG</text><text x="1184" y="648" fill="#aaa">1H FVG</text></g>
     <g font-size="7" fill="#aaa"><text x="1160" y="156">4H FVG IT</text><text x="1183" y="493">WH -</text><text x="1175" y="526">DH DL</text></g>
     <g class="mono" font-size="6" fill="#4e9e4f"><text x="1172" y="154">Buyside</text><text x="1161" y="368">Minor Buyside</text><text x="1160" y="612" fill="#b82239">Minor Sells</text></g>
     <g font-size="4" fill="#b9284a" text-anchor="middle"><text x="905" y="217">XAGUSD</text><text x="905" y="223">H1</text><text x="1053" y="325">XAGUSD</text><text x="1053" y="331">H1</text><text x="1084" y="357">XAGUSD</text><text x="1084" y="363">H1</text><text x="1153" y="610" fill="#45a34c">XAGUSD</text><text x="1153" y="604" fill="#45a34c">H1</text></g>
     <circle cx="1183" cy="618.500" r="6.500" fill="#090310" stroke="#7f45aa"/><path d="M1185 614l-4 5h4l-3 4" fill="none" stroke="#9c5bd0"/><circle cx="1187.500" cy="613.500" r="2" fill="#e72e50"/>
     <circle cx="1183" cy="634.500" r="6" fill="#e8eaf1" stroke="#b9223d" stroke-width="1.500"/><path d="M1178 635h10M1179 638h8M1183 632h5" stroke="#d84b5b"/><path d="M1178.500 630.500h4.500v3h-5z" fill="#397bc4"/>
     <path d="M45 624h9v10h-5v-5h-4zM60 624h6l-5 10h-5z" fill="#e9e9e9"/><circle cx="57" cy="626" r="2" fill="#e9e9e9"/>
    </svg>
    <div class="legend position-absolute">
     <div class="d-flex align-items-center gap-1"><svg class="ico ico-sm" viewBox="0 0 16 16"><circle cx="8" cy="8" r="8" fill="#d5a928" stroke="none"/><path d="M6.500 4h3l1 3h-5zM3 8.500h4l1 3H2.500zM9 8.500h4l1 3H8.500z" fill="#fff" stroke="none"/></svg><h1 class="m-0">Gold Spot / U.S. Dollar · 1h · OANDA</h1><svg class="ico ico-sm" viewBox="0 0 16 16"><circle cx="8" cy="8" r="7.500" fill="#15463b" stroke="none"/><circle cx="8" cy="8" r="3.500" fill="#47bd94" stroke="none"/></svg><div class="ohlc d-flex gap-2"><span><b>O</b>4,630.345</span><span><b>H</b>4,637.665</span><span><b>L</b>4,629.605</span><span><b>C</b>4,632.635</span><span>+2.375 (+0.05%)</span></div></div>
     <div class="d-flex align-items-center mt-1"><button class="tkt sell"><strong class="d-block">4,632.07⁰</strong>SELL</button><small class="spread px-1 text-center">64.0</small><button class="tkt buy"><strong class="d-block">4,632.71⁰</strong>BUY</button></div>
     <div class="studies">
      <div class="study d-flex align-items-center gap-1 text-white">PD Array Matrix [NINE ϴ] <svg class="ico ico-sm" viewBox="0 0 16 16"><circle cx="8" cy="8" r="8" fill="#5a2f91" stroke="none"/><path d="M4 8a4 4 0 0 1 7-3M12 8a4 4 0 0 1-7 3" stroke="#cda6f1" stroke-width="1.600"/></svg></div>
      <div class="study d-flex align-items-center gap-1 dim">ICT Killzones &amp; Pivots [TFO] <svg class="ico ico-sm text-light"><use href="#noeye"/></svg></div>
      <div class="study d-flex align-items-center gap-1 dim">SMC Structures and FVG <svg class="ico ico-sm text-light"><use href="#noeye"/></svg></div>
     </div>
     <button class="fold ico-btn text-white" aria-label="Collapse legend"><svg class="ico ico-sm"><use href="#up"/></svg></button>
    </div>
   </div>
   <div class="paxis position-relative flex-shrink-0" id="prices"><select class="unit position-absolute" aria-label="Currency"><option>USD</option></select><svg class="ico ico-sm unitmark"><use href="#chev"/></svg></div>
  </div>
  <div class="chartbox"><div class="taxis position-relative overflow-hidden" id="times"><svg class="ico ico-sm position-absolute" style="right:17px;top:3px"><use href="#hex"/></svg></div></div>
  <div class="status chartbox d-flex align-items-center justify-content-end pe-1">15:15:48 UTC+3</div>
 </div>
 <aside class="rightrail d-flex flex-column justify-content-between flex-shrink-0 position-relative">
  <div class="top"><button class="ico-btn" aria-label="Watchlist"><svg class="ico"><use href="#list"/></svg></button><button class="ico-btn" aria-label="Alerts"><svg class="ico"><use href="#alarm"/></svg></button><button class="ico-btn" aria-label="Object tree"><svg class="ico"><use href="#layers"/></svg></button><button class="ico-btn" aria-label="Chats"><svg class="ico"><use href="#chat"/></svg></button></div>
  <div><button class="ico-btn" aria-label="Screener"><svg class="ico"><use href="#radar"/></svg></button><button class="ico-btn" aria-label="Pine"><svg class="ico"><use href="#pyr"/></svg></button><button class="ico-btn" aria-label="Calendar"><svg class="ico"><use href="#cal"/></svg></button><button class="ico-btn position-relative" aria-label="News"><svg class="ico"><use href="#feed"/></svg><span class="count px-1" style="right:2px;top:2px">50</span></button><button class="ico-btn" aria-label="Notifications"><svg class="ico"><use href="#bell"/></svg></button><button class="ico-btn" aria-label="Products"><span class="apps-ring ico-btn"><svg class="ico"><use href="#dots9"/></svg></span></button><div class="last"><button class="ico-btn" aria-label="Help"><svg class="ico"><use href="#help"/></svg></button></div></div>
 </aside>
</main>

<footer class="dock d-flex align-items-center flex-shrink-0">
 <button class="ico-btn" aria-label="Start"><svg class="dockico" viewBox="0 0 16 16"><path d="M0 0h7.600v7.600H0zM8.400 0H16v7.600H8.400zM0 8.400h7.600V16H0zM8.400 8.400H16V16H8.400z" fill="#1f93dc"/></svg></button>
 <label class="searchbox d-flex align-items-center gap-1"><svg class="ico"><use href="#mag"/></svg><input type="text" placeholder="Search"><svg width="34" height="18" viewBox="0 0 34 18" aria-hidden="true"><path d="M6 9v8M17 9v8M28 9v8M3 12l3 4M14 12l3 4 3-4M31 12l-3 4" stroke="#51a750" stroke-width="1.500" fill="none"/><path d="M2 2l2 1 2-2 2 2 2-1v5q-4 5-8 0z" fill="#c44aae"/><path d="M13 2l2 1 2-2 2 2 2-1v5q-4 5-8 0z" fill="#dd4c61"/><path d="M24 2l2 1 2-2 2 2 2-1v5q-4 5-8 0z" fill="#f1bd38"/></svg></label>
 <div class="d-flex align-items-center ms-1">
 <button class="ico-btn" aria-label="Task view"><svg class="dockico" viewBox="0 0 16 16"><path d="M5 1h10v10H5z" fill="#d8d8d8"/><path d="M2 4h7v7h5v4H2z" fill="#333"/></svg></button>
 <button class="ico-btn" aria-label="Copilot"><svg class="dockico" viewBox="0 0 16 16"><path d="M4 2h6l-3 9H3Q0 9 4 2z" fill="#27a5dc"/><path d="M10 2q6 0 5 7l-4 5H5z" fill="#e466a5"/><path d="M6 1h5l2 4H8L6 9z" fill="#6657d4"/><path d="M3 10h5l1 4H5q-2 0-2-4z" fill="#f2aa3e"/></svg></button>
 <button class="ico-btn" aria-label="Files"><svg class="dockico" viewBox="0 0 16 16"><path d="M1 2h6l2 2h6v10H1z" fill="#e6a91c"/><path d="M1 6h14v8H1z" fill="#ffd65c"/><path d="M4 12h8v3H4z" fill="#267fc9"/></svg></button>
 <button class="ico-btn" aria-label="Edge"><svg class="dockico" viewBox="0 0 16 16"><circle cx="8" cy="8" r="7.500" fill="#1684cc"/><path d="M1 7Q4-1 11 2q5 3 4 7-3 3-6 1 3-5-3-5Q3 5 1 7z" fill="#48c7a0"/><path d="M6 8q0 5 7 5-5 4-9-1-1-3 2-4z" fill="#a9e3f4"/></svg></button>
 <button class="ico-btn" aria-label="Store"><svg class="dockico" viewBox="0 0 16 16"><path d="M5 4V1h6v3" fill="none" stroke="#21719b"/><rect x="1" y="4" width="14" height="11" rx="2" fill="#175b8f"/><path d="M5 6h2.500v2.500H5z" fill="#e94"/><path d="M8.500 6H11v2.500H8.500z" fill="#8c5"/><path d="M5 9.500h2.500V12H5z" fill="#5bd"/><path d="M8.500 9.500H11V12H8.500z" fill="#fc4"/></svg></button>
 <button class="ico-btn active-app" aria-label="Chrome"><svg class="dockico" viewBox="0 0 16 16"><circle cx="8" cy="8" r="7.500" fill="#33a852"/><path d="M1.500 4A7.500 7.500 0 0 1 15 5H8z" fill="#e94235"/><path d="M15 5A7.500 7.500 0 0 1 8 15.500L11 8V5z" fill="#fbbc05"/><circle cx="8" cy="8" r="3.600" fill="#fff"/><circle cx="8" cy="8" r="2.700" fill="#3d7ee8"/></svg></button>
 <button class="ico-btn" aria-label="TradingView"><svg class="dockico"><use href="#tv"/></svg></button>
 <button class="ico-btn" aria-label="Netflix"><svg class="dockico" viewBox="0 0 16 16"><path d="M5.500 14V2l5 12V2" fill="none" stroke="#b91624" stroke-width="2.200"/></svg></button>
 <button class="ico-btn position-relative" aria-label="WhatsApp"><svg class="dockico" viewBox="0 0 16 16"><circle cx="8" cy="8" r="6.500" fill="#d7eee9" stroke="#1f8d62" stroke-width="2"/><path d="M5 5q0 5 6 6" fill="none" stroke="#1f8d62" stroke-width="1.800"/><path d="M1 15l2-5 3 4z" fill="#1f8d62"/></svg><span class="count" style="right:1px;top:3px;background:#2b8584">75</span></button>
 <button class="ico-btn" aria-label="Settings"><svg class="dockico" viewBox="0 0 16 16"><circle cx="8" cy="8" r="6" fill="#53718c" stroke="#65788a" stroke-width="3" stroke-dasharray="3 1.700"/><circle cx="8" cy="8" r="4" fill="#dce8ef"/><circle cx="8" cy="8" r="2.600" fill="#1c70b2"/></svg></button>
 <button class="ico-btn position-relative" aria-label="OBS"><svg class="dockico" viewBox="0 0 16 16"><circle cx="8" cy="8" r="7.500" fill="#242428"/><path d="M8 8L6 3M8 8l5-1M8 8l-3 5" stroke="#aaa" stroke-width="1.500"/></svg><span class="count" style="right:3px;top:3px;width:9px;height:9px;min-width:0;background:#f00b12"></span></button>
 <button class="ico-btn position-relative" aria-label="Discord"><svg class="dockico" viewBox="0 0 16 16"><circle cx="8" cy="8" r="8" fill="#5865df"/><path d="M4 5q4-2 8 0l1 6-3 1-1-1H7l-1 1-3-1z" fill="#fff"/><path d="M6.300 8v1M9.700 8v1" stroke="#5865df" stroke-width="1.500"/></svg><span class="count" style="right:1px;top:3px;background:#d74a51">9+</span></button>
 </div>
 <div class="tray d-flex align-items-center ms-auto gap-2"><button aria-label="Hidden icons"><svg class="ico"><use href="#up"/></svg></button><button aria-label="Alerts off"><svg class="ico" viewBox="0 0 16 16"><path d="M3 12q2-2 1.500-6a4 4 0 0 1 7 0q0 4 1.500 6zM2 2l12 13M6 14h4"/></svg></button><button aria-label="Microphone"><svg class="ico" viewBox="0 0 16 16"><rect x="5.500" y="1" width="5" height="9" rx="2.500"/><path d="M3 8a5 5 0 0 0 10 0M8 13v2.500"/></svg></button></div>
</footer>
<div class="brain position-absolute ico-btn"><svg width="15" height="15" viewBox="0 0 16 16"><path d="M7.500 2Q3 0 3 4 0 5 1.500 8 0 11 3 12q1 4 4.500 2z" fill="#4d70e5"/><path d="M8.500 2Q13 0 13 4q3 1 1.500 4 1.500 3-1.500 4-1 4-4.500 2z" fill="#c547cc"/><path d="M3 7h4M5 4v7M9 6h4M11 8v4M9 10h4" stroke="#fff" stroke-width=".7"/></svg></div>
<div class="toast-y position-absolute"><strong class="d-block">New Follow</strong>Abhan followed</div>
<section class="goal position-absolute">
 <div class="goaltop"><span></span></div>
 <div class="goalbar d-flex"><div class="goalfill"></div><span class="align-self-center">My Goalbar: &nbsp;25 / 100 (25%)</span></div>
 <div class="goalgap"></div>
 <div class="channel d-flex align-items-center"><span class="yt ico-btn align-self-stretch"><svg width="17" height="12" viewBox="0 0 17 12"><rect width="17" height="12" rx="3" fill="#fff"/><path d="M7 3.500L11 6 7 8.500z" fill="#e60000"/></svg></span><span class="ps-2">MyYouTube</span><span class="sq ms-auto me-2"></span></div>
 <div class="redline"></div>
</section>
</div>
<script>
// Hourly bars: x, w (down) or b (up), high-low in plot units.
const bars=`103w109-150 106w150-225 108b165-200 110b160-195 113w153-205 116w209-256 119b220-259 121b215-228 122b209-225 123b200-227 125b193-215 126w190-207 129w204-213 131w216-323 133w281-345 134w331-380 135w348-392 138w355-415 139w378-433 140w430-575 142b468-609 144w436-525 145w448-533 147w462-520 148b460-524 150b455-498 151b420-467 153b420-442 154w404-451 157b437-453 158b418-447 160b377-425 161b373-410 163b336-385 165w346-370 167w376-422 169b369-414 170w338-395 172w377-423 174w411-448 175b407-445 177b383-421 178w401-478 180w467-555 181w517-563 183b478-545 184w492-546 186w519-638 188b594-630 189w595-619 190b569-643 192w598-643 212b621-643 215w628-643 216b596-643 217w627-643 261b630-643 262b630-643 265b551-643 266b526-567 267b492-550 269w491-517 270w509-531 273w525-557 275w544-573 277w536-566 279w531-578 281b546-550 283b511-555 285w513-585 287b518-571 289w530-582 291w533-555 294w530-575 296w564-627 297w562-618 300w589-625 302b565-598 303b559-587 305w569-606 307b588-612 310w585-643 323b636-643 345b640-643 360b578-643 361b546-600 362w572-601 364w585-629 366w578-603 367w581-614 369w587-625 370w600-640 372w620-643 376b592-643 378b590-635 380b583-625 381b577-613 383b551-597 385w570-592 388w563-583 391b517-581 394w518-592 396b565-596 397b544-590 399w553-593 400w562-600 402w583-614 403b598-620 405w592-611 408b580-620 410b555-633 411b471-520 412w484-533 415w519-551 417b515-543 419w530-548 421b540-559 423w525-538 425w537-576 426b520-563 429w495-530 430b482-530 432w458-499 434b433-485 436b414-450 439b394-430 441w392-418 443b380-421 444b377-410 447w349-400 448w377-402 450w384-405 452w397-415 453b373-405 455b340-397 456w322-365 458b332-365 460w343-363 461b333-360 462b306-350 464w316-350 466b325-358 467b300-350 469b278-310 471w271-293 473w291-329 475b289-315 477w296-317 478b283-317 480b263-295 481b265-290 483w279-435 485w373-428 486w378-406 488w399-509 491b485-547 492b434-496 493w437-475 497w452-490 498w457-501 500b457-500 502b434-516 503b378-435 505w396-440 507w411-437 510b412-430 511b398-422 512b403-415 514w430-485 516w434-488 517b470-492 519b445-468 521b410-465 522w437-464 524b430-447 525w402-437 527b410-442 528b390-440 530b379-410 532w370-388 533w380-395 536w392-424 538b395-424 539b380-424 541w395-420 542w408-429 544w421-438 546w424-439 548w423-438 550b415-427 553w421-436 555w418-473 557b430-470 559b425-448 561w421-465 563b435-448 564w436-450 566b387-441 567w383-423 569w399-437 571b420-458 572b411-436 574w418-455 575w421-484 577b420-464 579b421-430 580b392-431 582w393-427 583b356-422 584b360-380 587b224-362 589w199-253 591w235-277 593w256-270 596b256-269 597b215-250 598w219-253 600w240-264 602w247-290 604w268-293 606b270-296 608b256-296 609w256-300 611w272-340 613b303-338 615w303-330 618w327-373 620w342-378 623w345-375 624w352-379 627b352-376 628w340-358 630b353-371 633w348-370 634w348-370 637b340-363 639b340-355 641b324-350 643w308-336 645b318-335 647b290-326 648b276-310 650w263-281 651b264-290 653w265-295 655w282-302 657w293-305 659w303-312 661w306-320 663b290-305 664w300-333 667b297-312 670w302-329 672b312-330 673w316-342 675b318-330 677b307-325 679b293-313 681b285-297 683w269-293 685w278-308 686w305-323 688b298-310 690w295-312 691b296-312 692w310-331 694w394-441 696b408-440 697b378-418 699b345-385 700w346-364 703b350-360 705b340-358 707b344-356 709w333-355 711w345-363 713b354-365 714w344-373 716b350-365 718b340-370 720w343-376 722b335-365 723w320-348 725b333-347 728w325-333 730b310-325 732w303-318 734b288-310 735w290-305 738w290-302 740b290-302 742w295-311 744w267-300 745b276-295 747w276-300 749w277-319 752w289-305 754b257-296 755b243-275 758w250-260 759b217-258 761b212-228 763b212-220 765w207-227 767b212-222 769b218-235 771b184-220 772w204-242 774w231-245 776w230-254 778w240-259 781b248-258 783w242-279 785b250-275 787w252-262 789w230-252 791b230-278 792w246-278 794b248-260 796w255-274 798b262-270 800w264-277 802b246-272 804b233-256 806w222-250 808w232-250 809b228-245 811b227-241 813w221-238 815w230-247 817w238-255 819w240-252 821b238-250 824w237-285 827w250-294 829b252-278 831w270-283 834b268-280 836w270-278 838w268-280 840b266-277 842w270-300 844b266-280 847b262-278 848w258-280 850w269-285 852w275-288 854b268-282 855w262-280 857w270-283 859b225-280 861b161-270 863w168-200 864w175-202 866w182-190 867w186-203 869w188-202 871w192-204 872w202-229 874w270-300 875w288-335 877b298-327 879b248-300 881w260-275 883b265-275 885b273-285 887w257-281 889b270-280 891w260-280 893b268-278 895b240-268 897w235-260 899w232-271 901w257-271 903b257-268 905b249-258 907b245-257 908b240-250 910w227-242 912w229-241 913b229-247 915w245-259 917w255-265 918w263-277 920w267-283 922w274-292 925w271-293 927b275-285 929w276-285 931b266-292 932b270-295 935w283-350 937w330-368 940w358-388 942w360-413 945b357-412 947b331-358 949b325-345 950b315-332 952b310-325 954b305-315 956w302-318 957b295-318 959w295-305 961w302-313 963w308-325 966b307-325 968w308-331 970w320-338 972b335-345 974w330-348 976b333-345 977b320-340 979w325-335 981w330-347 983w340-347 985b316-383 987w320-350 988w348-380 990b365-378 992b362-375 994b355-366 996w349-368 998w365-375 1001w375-395 1002b350-375 1003w340-372 1004b328-358 1006b340-355 1008w331-357 1011w338-418 1013w352-377 1015w368-393 1017b378-388 1019w375-390 1022w365-390 1023w376-408 1025w400-415 1027b407-425 1029w393-412 1031w391-415 1033w381-400 1035w388-402 1037w393-406 1039b378-400 1041b355-380 1043b332-358 1045w341-354 1047w344-357 1049w346-358 1050w357-370 1054w381-404 1055w395-408 1057b390-408 1059b370-398 1060b350-385 1062b343-366 1064w347-367 1066b358-363 1067b358-374 1069w362-374 1071w365-378 1073w370-377 1076w364-390 1078w380-406 1080w395-415 1082b394-414 1085b393-403 1087w396-403 1089b385-400 1091b383-397 1093w376-398 1094w392-415 1096w403-415 1098w410-415 1100w414-464 1101w443-466 1103w450-472 1105w452-485 1107w474-490 1109w483-499 1110w487-546 1112b494-542 1113w499-525 1114w525-544 1116b520-533 1118b494-520 1120w493-503 1123b493-503 1126w494-507 1128b481-500 1130w495-522 1132b490-505 1134w488-500 1136w485-506 1138w498-518 1140w513-540 1142w518-550 1144b523-545 1146w529-562 1149w546-598 1150b560-585 1152w545-565 1154w535-560 1156w555-590 1158b550-575 1160b553-563 1162b545-560 1164b527-545 1167w515-540 1169w530-545 1171w544-562 1172b530-545 1174b503-540 1176b490-510 1177b458-490 1179b455-475 1181w439-462 1182b450-458`;
const paths={w:"",b:""};
for(const t of bars.split(" ")){const m=t.match(/(\d+)([wb])(\d+)-(\d+)/);paths[m[2]]+=`M${m[1]} ${m[3]}V${m[4]}`}
document.getElementById("bars").innerHTML=`<path d="${paths.b}" stroke="#3948b4" opacity=".9"/><path d="${paths.w}" stroke="#d4c7ca" opacity=".72"/>`;
// Price scale: centre y within the pane, text, kind; later entries lie on top.
const prices=[[22,"4,920.000"],[44,"4,899.460","w"],[65,"4,880.000"],[87,"4,860.000"],[109,"4,840.000"],[154,"4,800.000"],[145,"4,809.948","x"],[133,"4,818.868","g"],[149,"4,805.178","r"],[177,"4,780.000"],[168,"4,788.348","g"],[200,"4,760.000"],[186,"4,771.311","x"],[192,"4,766.141","r"],[219,"4,745.585","x"],[211,"4,750.258","r"],[245,"4,720.000"],[228,"4,734.964","r"],[239,"4,725.427","g"],[261,"4,705.788","r"],[267,"4,700.491","g"],[291,"4,680.000"],[281,"4,688.772","r"],[314,"4,660.000"],[337,"4,640.000"],[361,"4,620.000"],[351,"4,632.635<br>44:12","b"],[407,"4,580.000"],[381,"4,602.645","y"],[414,"4,574.520","y"],[432,"4,560.000","x"],[426,"4,564.347","r"],[456,"4,540.500"],[451,"4,543.860","x"],[441,"4,551.200","r"],[475,"4,522.500"],[466,"4,530.938","g"],[481,"4,518.378","g"],[496,"4,504.500"],[518,"4,486.500"]];
const box=document.getElementById("prices");
for(const [y,t,k] of prices)box.insertAdjacentHTML("beforeend",`<span class="plabel ${k?"k-"+k:""}" style="top:${y-(k==="b"?10:6)}px">${t}</span>`);
box.append(box.querySelector("select"),box.querySelector("svg"));
const ticks=[[46,17],[82,18],[118,19],[154,20],[298,26],[334,27],[370,30],[406,31],[442,"Apr"],[478,2],[514,6],[550,7],[586,8],[622,9],[658,10],[694,13],[729,14],[765,15],[801,16],[837,17],[873,20],[909,21],[945,22],[981,23],[1017,24],[1053,27],[1089,28],[1125,29],[1161,30],[1195,"Ma"]];
for(const [x,t] of ticks)document.getElementById("times").insertAdjacentHTML("beforeend",`<span class="tick" style="left:${x-38}px">${t}</span>`);
</script>
<script src="https://cdn.jsdelivr.net/npm/bootstrap@5.3.0/dist/js/bootstrap.bundle.min.js"></script>
</body>
</html>
